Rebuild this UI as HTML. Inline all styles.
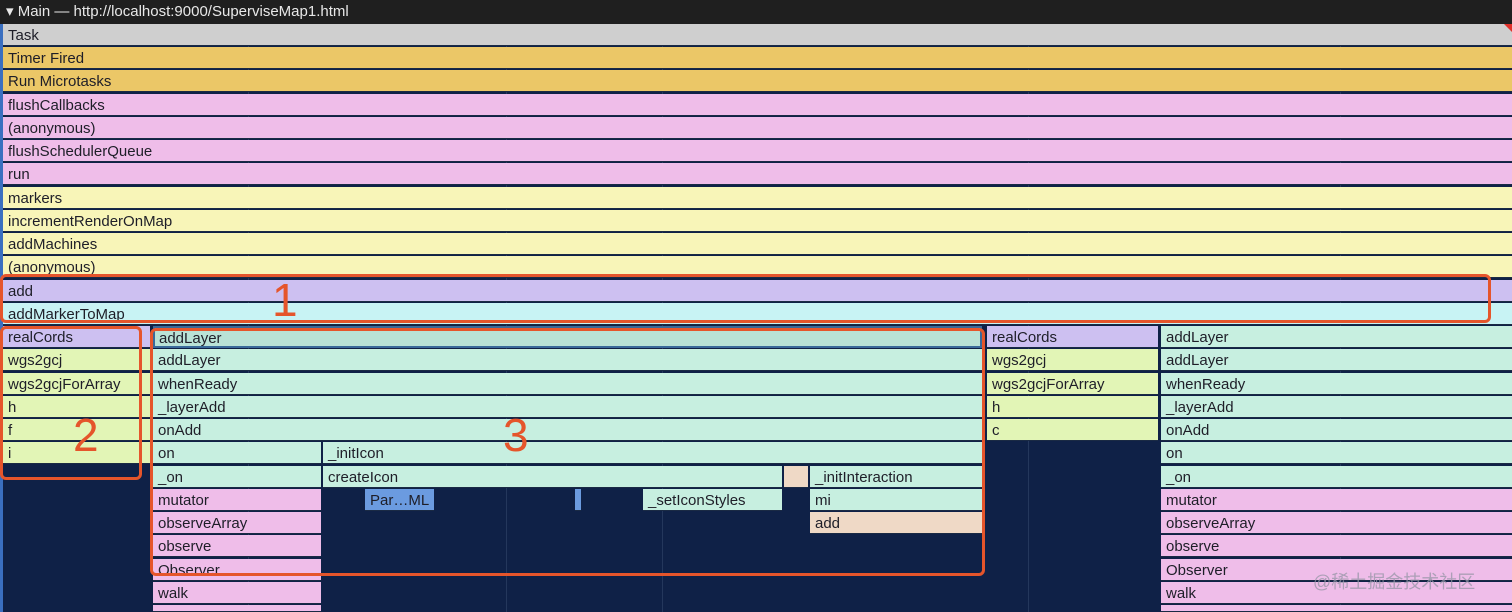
<!DOCTYPE html>
<html><head><meta charset="utf-8"><style>
html,body{margin:0;width:1512px;height:612px;overflow:hidden}
body{background:#0f2147;font-family:"Liberation Sans","Noto Sans CJK SC",sans-serif;position:relative}
.b{position:absolute;height:22px;line-height:24px;font-size:15px;color:#1e1e28;padding-left:5px;box-sizing:border-box;white-space:nowrap;overflow:hidden;border-bottom:1px solid #1a2a44}
.k{background:#cfcfcf}.t{background:#ebc767}.p{background:#efbde9}.y{background:#f8f5b8}.u{background:#cdc0f1}.c{background:#c8f3f4}.g{background:#e2f5b6}.m{background:#c7efe0}.o{background:#efd9c6}.l{background:#6b9be0}
.box{position:absolute;border:3px solid #e5552b;border-radius:6px;box-sizing:border-box}
.n{position:absolute;color:#e5552b;font-size:46px;line-height:46px}
.v{position:absolute;top:24px;height:588px;width:1px;background:#24375c}
</style></head><body>
<div style="position:absolute;left:0;top:0;width:1512px;height:24px;background:#1f1f1f;color:#e8e8e8;font-size:15px;line-height:24px;padding-left:6px;box-sizing:border-box">▾ Main — http://localhost:9000/SuperviseMap1.html</div>
<div style="position:absolute;left:0;top:24px;width:3px;height:588px;background:#3a6fc0"></div>
<div class="v" style="left:248px"></div><div class="v" style="left:506px"></div><div class="v" style="left:662px"></div><div class="v" style="left:1028px"></div><div class="v" style="left:1340px"></div>
<div class="b k" style="left:3px;top:24px;width:1509px">Task</div>
<div style="position:absolute;right:0;top:24px;width:0;height:0;border-left:8px solid transparent;border-top:8px solid #e0302a"></div>
<div class="b t" style="left:3px;top:47px;width:1509px">Timer Fired</div>
<div class="b t" style="left:3px;top:70px;width:1509px">Run Microtasks</div>
<div class="b p" style="left:3px;top:94px;width:1509px">flushCallbacks</div>
<div class="b p" style="left:3px;top:117px;width:1509px">(anonymous)</div>
<div class="b p" style="left:3px;top:140px;width:1509px">flushSchedulerQueue</div>
<div class="b p" style="left:3px;top:163px;width:1509px">run</div>
<div class="b y" style="left:3px;top:187px;width:1509px">markers</div>
<div class="b y" style="left:3px;top:210px;width:1509px">incrementRenderOnMap</div>
<div class="b y" style="left:3px;top:233px;width:1509px">addMachines</div>
<div class="b y" style="left:3px;top:256px;width:1509px">(anonymous)</div>
<div class="b u" style="left:3px;top:280px;width:1509px">add</div>
<div class="b c" style="left:3px;top:303px;width:1509px">addMarkerToMap</div>

<div class="b u" style="left:3px;top:326px;width:147px">realCords</div>
<div class="b g" style="left:3px;top:349px;width:147px">wgs2gcj</div>
<div class="b g" style="left:3px;top:373px;width:147px">wgs2gcjForArray</div>
<div class="b g" style="left:3px;top:396px;width:147px">h</div>
<div class="b g" style="left:3px;top:419px;width:147px">f</div>
<div class="b g" style="left:3px;top:442px;width:147px">i</div>

<div class="b m" style="left:153px;top:326px;width:829px;background:#b9e2d6;border:2px solid #3a6a9a;line-height:21px;padding-left:4px">addLayer</div>
<div class="b m" style="left:153px;top:349px;width:829px">addLayer</div>
<div class="b m" style="left:153px;top:373px;width:829px">whenReady</div>
<div class="b m" style="left:153px;top:396px;width:829px">_layerAdd</div>
<div class="b m" style="left:153px;top:419px;width:829px">onAdd</div>
<div class="b m" style="left:153px;top:442px;width:168px">on</div>
<div class="b m" style="left:323px;top:442px;width:659px">_initIcon</div>
<div class="b m" style="left:153px;top:466px;width:168px">_on</div>
<div class="b m" style="left:323px;top:466px;width:459px">createIcon</div>
<div class="b o" style="left:784px;top:466px;width:24px"></div>
<div class="b m" style="left:810px;top:466px;width:172px">_initInteraction</div>
<div class="b p" style="left:153px;top:489px;width:168px">mutator</div>
<div class="b l" style="left:365px;top:489px;width:69px">Par…ML</div>
<div class="b l" style="left:575px;top:489px;width:6px;padding:0"></div>
<div class="b m" style="left:643px;top:489px;width:139px">_setIconStyles</div>
<div class="b m" style="left:810px;top:489px;width:172px">mi</div>
<div class="b o" style="left:810px;top:512px;width:172px">add</div>
<div class="b p" style="left:153px;top:512px;width:168px">observeArray</div>
<div class="b p" style="left:153px;top:535px;width:168px">observe</div>
<div class="b p" style="left:153px;top:559px;width:168px">Observer</div>
<div class="b p" style="left:153px;top:582px;width:168px">walk</div>
<div class="b p" style="left:153px;top:605px;width:168px;height:7px"></div>

<div class="b u" style="left:987px;top:326px;width:171px">realCords</div>
<div class="b g" style="left:987px;top:349px;width:171px">wgs2gcj</div>
<div class="b g" style="left:987px;top:373px;width:171px">wgs2gcjForArray</div>
<div class="b g" style="left:987px;top:396px;width:171px">h</div>
<div class="b g" style="left:987px;top:419px;width:171px">c</div>

<div class="b m" style="left:1161px;top:326px;width:351px">addLayer</div>
<div class="b m" style="left:1161px;top:349px;width:351px">addLayer</div>
<div class="b m" style="left:1161px;top:373px;width:351px">whenReady</div>
<div class="b m" style="left:1161px;top:396px;width:351px">_layerAdd</div>
<div class="b m" style="left:1161px;top:419px;width:351px">onAdd</div>
<div class="b m" style="left:1161px;top:442px;width:351px">on</div>
<div class="b m" style="left:1161px;top:466px;width:351px">_on</div>
<div class="b p" style="left:1161px;top:489px;width:351px">mutator</div>
<div class="b p" style="left:1161px;top:512px;width:351px">observeArray</div>
<div class="b p" style="left:1161px;top:535px;width:351px">observe</div>
<div class="b p" style="left:1161px;top:559px;width:351px">Observer</div>
<div class="b p" style="left:1161px;top:582px;width:351px">walk</div>
<div class="b p" style="left:1161px;top:605px;width:351px;height:7px"></div>

<div class="box" style="left:0;top:274px;width:1491px;height:49px"></div>
<div class="box" style="left:0;top:326px;width:142px;height:154px"></div>
<div class="box" style="left:150px;top:328px;width:835px;height:248px"></div>
<div class="n" style="left:272px;top:277px">1</div>
<div class="n" style="left:73px;top:412px">2</div>
<div class="n" style="left:503px;top:412px">3</div>
<div style="position:absolute;left:1313px;top:571px;font-size:18px;line-height:22px;color:rgba(150,150,165,0.75)">@稀土掘金技术社区</div>
</body></html>
